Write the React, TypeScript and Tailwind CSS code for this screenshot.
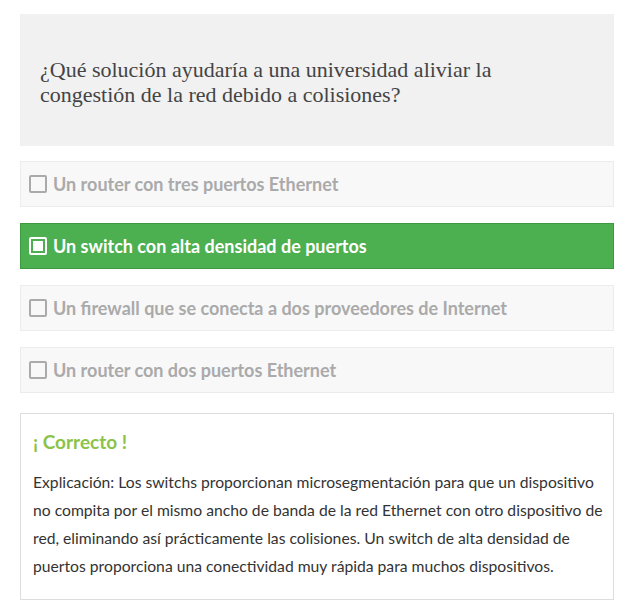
import { useState } from "react";

const OPTIONS = [
  "Un router con tres puertos Ethernet",
  "Un switch con alta densidad de puertos",
  "Un firewall que se conecta a dos proveedores de Internet",
  "Un router con dos puertos Ethernet",
];

const CORRECT = 1;

// line breaks follow the original layout
const EXPLANATION = [
  "Explicación: Los switchs proporcionan microsegmentación para que un dispositivo",
  "no compita por el mismo ancho de banda de la red Ethernet con otro dispositivo de",
  "red, eliminando así prácticamente las colisiones. Un switch de alta densidad de",
  "puertos proporciona una conectividad muy rápida para muchos dispositivos.",
];

function Box({ checked }: { checked: boolean }) {
  if (checked) {
    return (
      <span className="flex h-[18px] w-[18px] shrink-0 items-center justify-center rounded-[2px] border-2 border-white">
        <span className="h-[10px] w-[10px] bg-white" />
      </span>
    );
  }
  return <span className="h-[18px] w-[18px] shrink-0 rounded-[2px] border-2 border-[#aaaaaa]" />;
}

export default function App() {
  const [picked] = useState(CORRECT);

  return (
    <div className="min-h-screen bg-white px-5 pt-[14px] font-['Lato',sans-serif]">
      {/* question */}
      <div className="flex h-[132px] items-center bg-[#f1f1f1] px-5 pt-1">
        <h2 className="font-['Liberation_Serif',serif] text-[22px] leading-[25px] text-[#444444]">
          ¿Qué solución ayudaría a una universidad aliviar la
          <br />
          congestión de la red debido a colisiones?
        </h2>
      </div>

      {/* answers */}
      <div className="mt-[15px] flex flex-col gap-4">
        {OPTIONS.map((o, i) => {
          const on = i === picked;
          return (
            <div
              key={o}
              className={`flex h-[46px] items-center gap-[6px] border px-2 text-[18px] font-bold ${
                on
                  ? "border-[#3e9a42] bg-[#4caf50] text-white"
                  : "border-[#ececec] bg-[#f8f8f8] text-[#aaaaaa]"
              }`}
            >
              <Box checked={on} />
              <span>{o}</span>
            </div>
          );
        })}
      </div>

      {/* feedback */}
      <div className="mt-5 border border-[#dddddd] pb-[19px] pl-3 pr-2 pt-4">
        <h3 className="text-[19px] font-bold leading-6 text-[#8bc34a]">¡ Correcto !</h3>
        <p className="mt-[14px] whitespace-nowrap text-[15.7px] leading-[28px] text-[#333333]">
          {EXPLANATION.map((l, i) => (
            <span key={i} className="block">
              {l}
            </span>
          ))}
        </p>
      </div>
    </div>
  );
}
